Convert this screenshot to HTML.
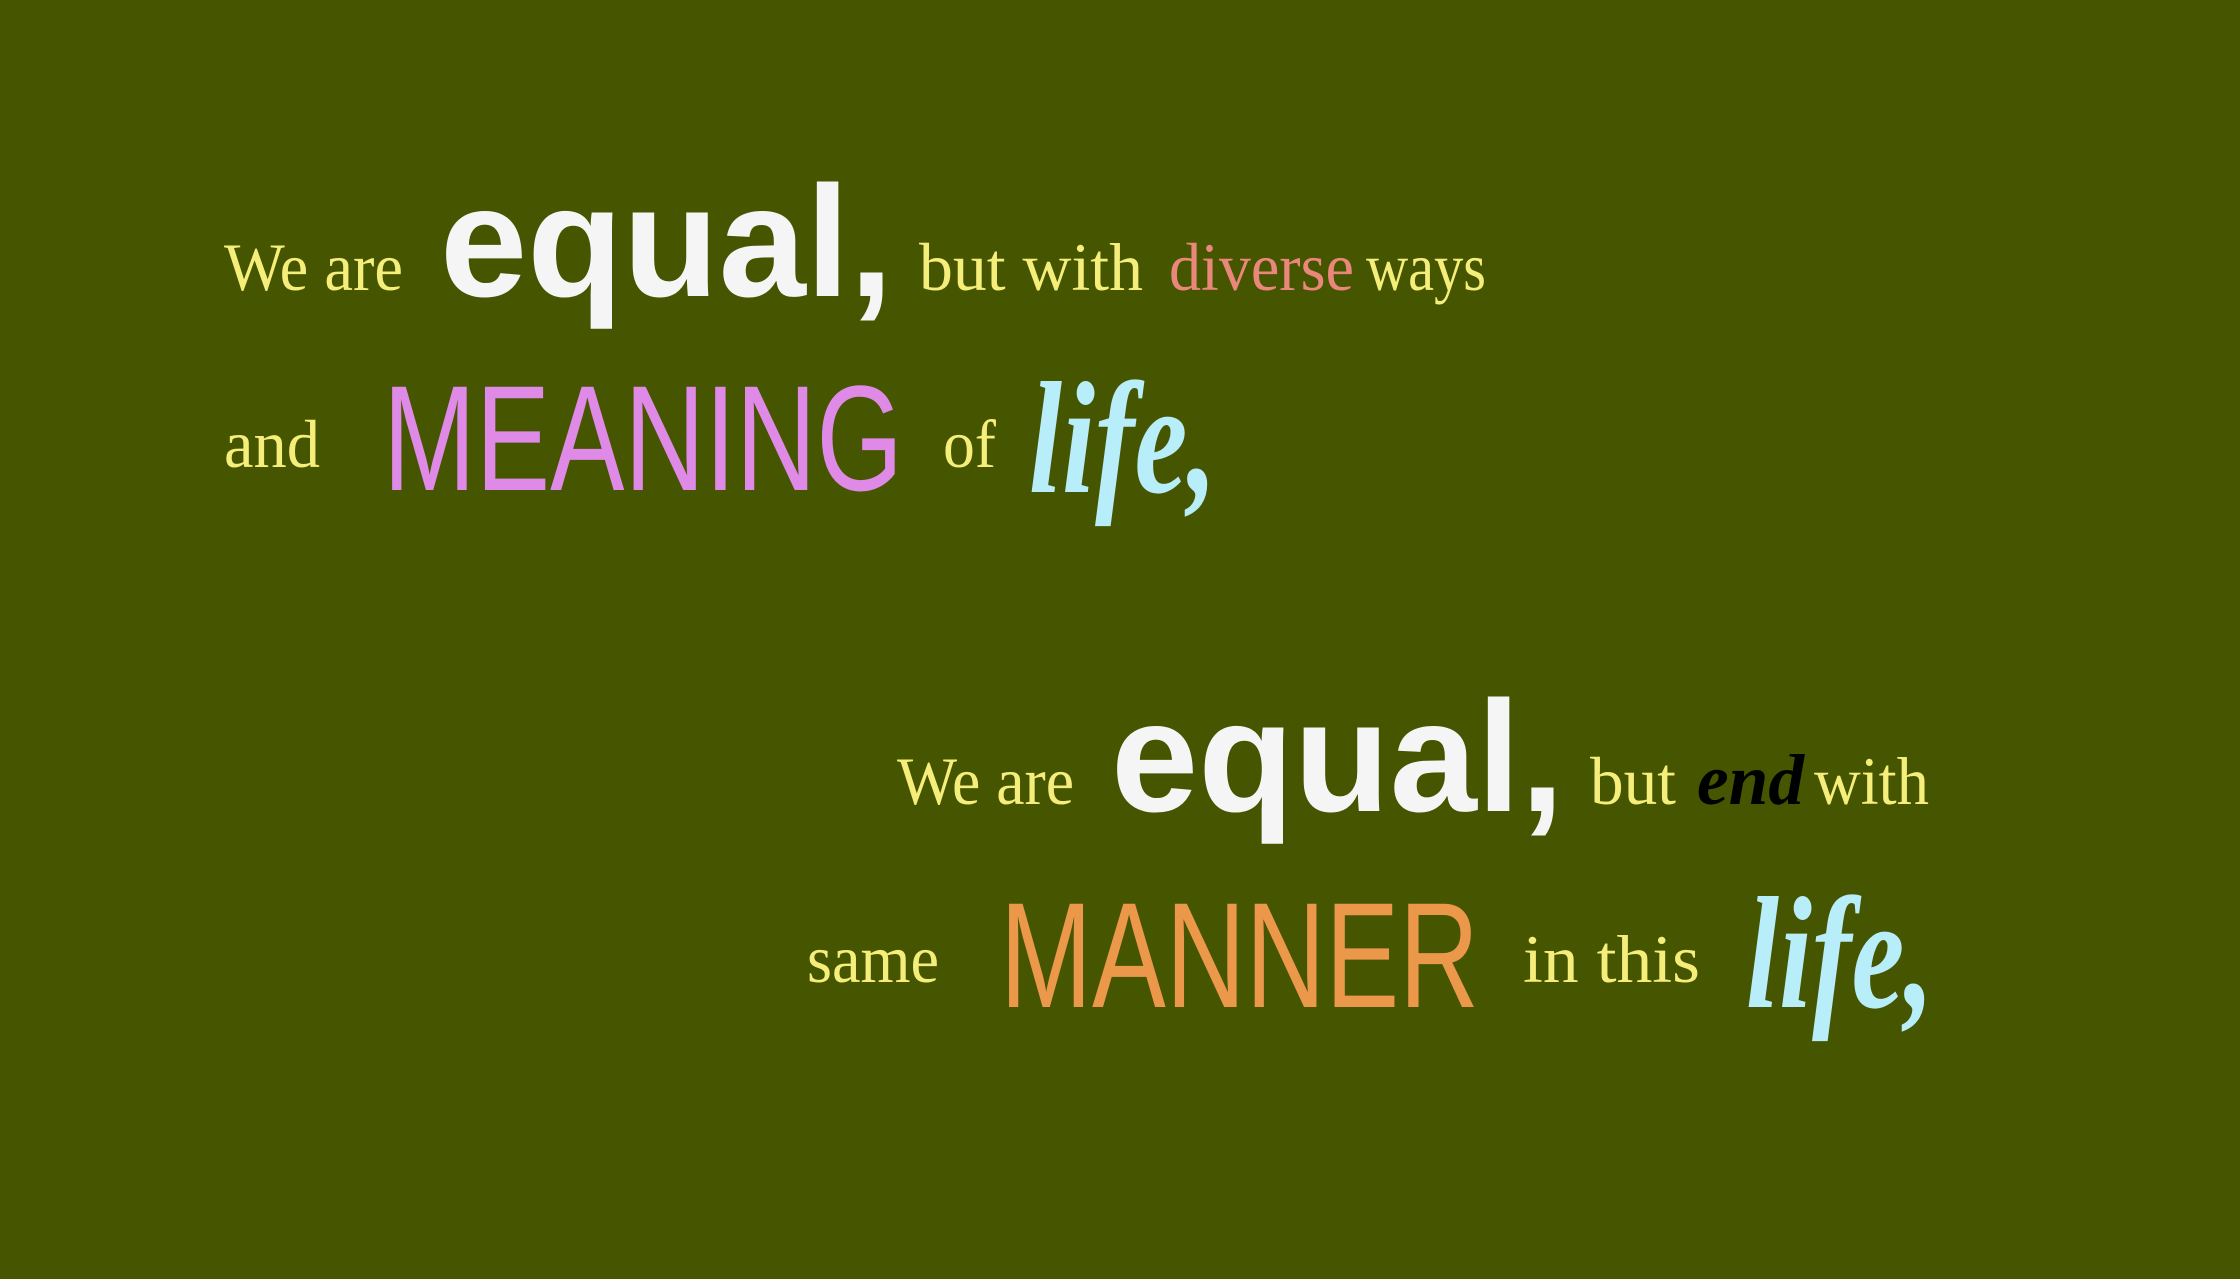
<!DOCTYPE html>
<html><head><meta charset="utf-8"><style>
html,body{margin:0;padding:0;background:#465500;width:2240px;height:1279px;overflow:hidden}
svg{display:block}
.y{fill:#f6ee7a;font-family:"Liberation Serif",serif;font-size:68px}
.eq{fill:#f5f5f5;font-family:"Liberation Sans",sans-serif;font-weight:bold;font-size:158px}
.cap{font-family:"Liberation Sans",sans-serif;font-size:150px}
.life{fill:#b8eefa;font-family:"Liberation Serif",serif;font-style:italic;font-weight:bold;font-size:160px}
</style></head><body>
<svg width="2240" height="1279" viewBox="0 0 2240 1279" xmlns="http://www.w3.org/2000/svg">
<rect width="2240" height="1279" fill="#465500"/>
<text class="y" x="224" y="290" textLength="179" lengthAdjust="spacingAndGlyphs">We are</text>
<text class="eq" x="440" y="296" textLength="453" lengthAdjust="spacingAndGlyphs">equal,</text>
<text class="y" x="919" y="290" textLength="224" lengthAdjust="spacingAndGlyphs">but with</text>
<text class="y" x="1169" y="290" textLength="185" lengthAdjust="spacingAndGlyphs" style="fill:#e8877a">diverse</text>
<text class="y" x="1366" y="290" textLength="120" lengthAdjust="spacingAndGlyphs">ways</text>
<text class="y" x="224" y="467" textLength="96" lengthAdjust="spacingAndGlyphs">and</text>
<text class="cap" x="383" y="490" textLength="520" lengthAdjust="spacingAndGlyphs" style="fill:#e08ae8">MEANING</text>
<text class="y" x="943" y="467" textLength="53" lengthAdjust="spacingAndGlyphs">of</text>
<text class="life" x="1029" y="492" textLength="188" lengthAdjust="spacingAndGlyphs">life,</text>
<text class="y" x="897" y="804" textLength="177" lengthAdjust="spacingAndGlyphs">We are</text>
<text class="eq" x="1111" y="811" textLength="453" lengthAdjust="spacingAndGlyphs">equal,</text>
<text class="y" x="1590" y="804" textLength="86" lengthAdjust="spacingAndGlyphs">but</text>
<text x="1697" y="804" textLength="107" lengthAdjust="spacingAndGlyphs" style="fill:#000;font-family:'Liberation Serif',serif;font-style:italic;font-weight:bold;font-size:72px">end</text>
<text class="y" x="1814" y="804" textLength="115" lengthAdjust="spacingAndGlyphs">with</text>
<text class="y" x="807" y="982" textLength="132" lengthAdjust="spacingAndGlyphs">same</text>
<text class="cap" x="1000" y="1007" textLength="479" lengthAdjust="spacingAndGlyphs" style="fill:#ec984a">MANNER</text>
<text class="y" x="1523" y="982" textLength="177" lengthAdjust="spacingAndGlyphs">in this</text>
<text class="life" x="1746" y="1007" textLength="188" lengthAdjust="spacingAndGlyphs">life,</text>
</svg>
</body></html>
